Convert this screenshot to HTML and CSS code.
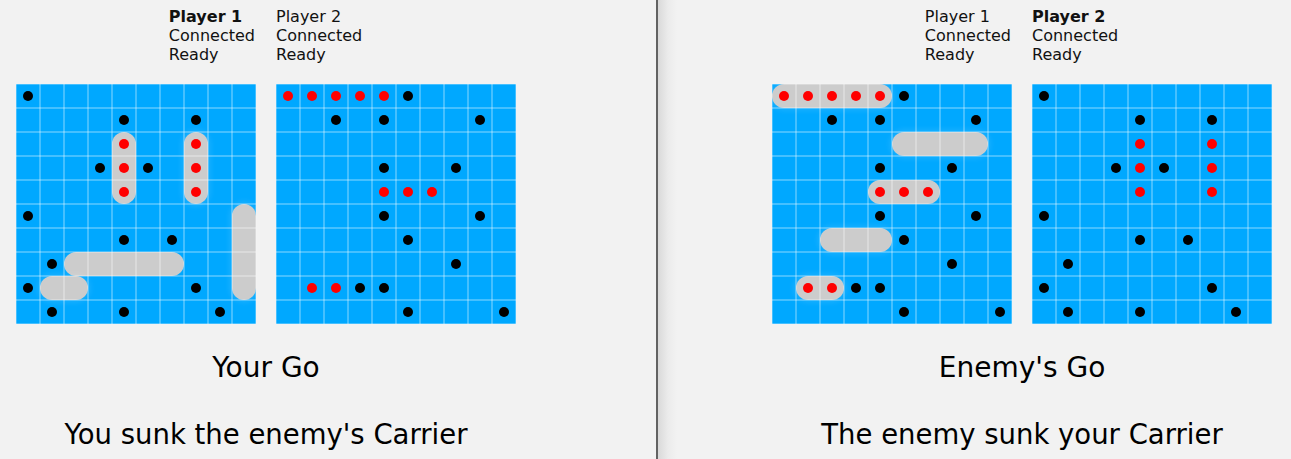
FILE: index.html
```html
<!DOCTYPE html>
<html lang="en">
<head>
<meta charset="utf-8">
<title>Battleships</title>
<link rel="stylesheet" href="styles.css">
</head>
<body>
<div class="screen">
  <section class="panel panel--left">
    <div class="game">
      <div class="status">
        <div class="player player--first"><b>Player 1</b><span>Connected</span><span>Ready</span></div>
        <div class="player"><span>Player 2</span><span>Connected</span><span>Ready</span></div>
      </div>
      <div class="boards">
        <div class="board">
          <div class="ship r2 c4 v3"></div>
          <div class="ship halo r2 c7 v3"></div>
          <div class="ship halo r5 c9 v4"></div>
          <div class="ship r7 c2 h5"></div>
          <div class="ship halo r8 c1 h2"></div>
          <i class="dot hit r2 c4"></i><i class="dot hit r3 c4"></i><i class="dot hit r4 c4"></i>
          <i class="dot hit r2 c7"></i><i class="dot hit r3 c7"></i><i class="dot hit r4 c7"></i>
          <i class="dot r0 c0"></i><i class="dot r1 c4"></i><i class="dot r1 c7"></i>
          <i class="dot r3 c3"></i><i class="dot r3 c5"></i><i class="dot r5 c0"></i>
          <i class="dot r6 c4"></i><i class="dot r6 c6"></i><i class="dot r7 c1"></i>
          <i class="dot r8 c0"></i><i class="dot r8 c7"></i><i class="dot r9 c1"></i>
          <i class="dot r9 c4"></i><i class="dot r9 c8"></i>
        </div>
        <div class="board">
          <i class="dot hit r0 c0"></i><i class="dot hit r0 c1"></i><i class="dot hit r0 c2"></i>
          <i class="dot hit r0 c3"></i><i class="dot hit r0 c4"></i>
          <i class="dot hit r4 c4"></i><i class="dot hit r4 c5"></i><i class="dot hit r4 c6"></i>
          <i class="dot hit r8 c1"></i><i class="dot hit r8 c2"></i>
          <i class="dot r0 c5"></i><i class="dot r1 c2"></i><i class="dot r1 c4"></i>
          <i class="dot r1 c8"></i><i class="dot r3 c4"></i><i class="dot r3 c7"></i>
          <i class="dot r5 c4"></i><i class="dot r5 c8"></i><i class="dot r6 c5"></i>
          <i class="dot r7 c7"></i><i class="dot r8 c3"></i><i class="dot r8 c4"></i>
          <i class="dot r9 c5"></i><i class="dot r9 c9"></i>
        </div>
      </div>
      <p class="turn">Your Go</p>
      <p class="message">You sunk the enemy's Carrier</p>
    </div>
  </section>
  <section class="panel panel--right">
    <div class="game">
      <div class="status">
        <div class="player player--first"><span>Player 1</span><span>Connected</span><span>Ready</span></div>
        <div class="player"><b>Player 2</b><span>Connected</span><span>Ready</span></div>
      </div>
      <div class="boards">
        <div class="board">
          <div class="ship halo r0 c0 h5"></div>
          <div class="ship halo r2 c5 h4"></div>
          <div class="ship r4 c4 h3"></div>
          <div class="ship halo r6 c2 h3"></div>
          <div class="ship halo r8 c1 h2"></div>
          <i class="dot hit r0 c0"></i><i class="dot hit r0 c1"></i><i class="dot hit r0 c2"></i>
          <i class="dot hit r0 c3"></i><i class="dot hit r0 c4"></i>
          <i class="dot hit r4 c4"></i><i class="dot hit r4 c5"></i><i class="dot hit r4 c6"></i>
          <i class="dot hit r8 c1"></i><i class="dot hit r8 c2"></i>
          <i class="dot r0 c5"></i><i class="dot r1 c2"></i><i class="dot r1 c4"></i>
          <i class="dot r1 c8"></i><i class="dot r3 c4"></i><i class="dot r3 c7"></i>
          <i class="dot r5 c4"></i><i class="dot r5 c8"></i><i class="dot r6 c5"></i>
          <i class="dot r7 c7"></i><i class="dot r8 c3"></i><i class="dot r8 c4"></i>
          <i class="dot r9 c5"></i><i class="dot r9 c9"></i>
        </div>
        <div class="board">
          <i class="dot hit r2 c4"></i><i class="dot hit r3 c4"></i><i class="dot hit r4 c4"></i>
          <i class="dot hit r2 c7"></i><i class="dot hit r3 c7"></i><i class="dot hit r4 c7"></i>
          <i class="dot r0 c0"></i><i class="dot r1 c4"></i><i class="dot r1 c7"></i>
          <i class="dot r3 c3"></i><i class="dot r3 c5"></i><i class="dot r5 c0"></i>
          <i class="dot r6 c4"></i><i class="dot r6 c6"></i><i class="dot r7 c1"></i>
          <i class="dot r8 c0"></i><i class="dot r8 c7"></i><i class="dot r9 c1"></i>
          <i class="dot r9 c4"></i><i class="dot r9 c8"></i>
        </div>
      </div>
      <p class="turn">Enemy's Go</p>
      <p class="message">The enemy sunk your Carrier</p>
    </div>
  </section>
</div>
</body>
</html>
```
FILE: styles.css
```css
* { box-sizing: border-box; }
html, body { margin: 0; padding: 0; }
body {
  background: #f2f2f2;
  color: #111;
  font-family: "DejaVu Sans", "Liberation Sans", sans-serif;
  overflow: hidden;
}
.screen {
  display: flex;
  height: 459px;
}
.panel {
  height: 100%;
}
.panel--left {
  width: 656px;
  flex: none;
  padding-left: 16px;
}
.panel--right {
  flex: 1;
  border-left: 2px solid #626262;
  padding-left: 114px;
  background: linear-gradient(to right, #d9d9d9 0, #ebebeb 10px, #f2f2f2 19px);
}
.game {
  width: 500px;
  display: flex;
  flex-direction: column;
}
.status {
  display: grid;
  grid-template-columns: 240px 240px;
  column-gap: 20px;
  padding-top: 7px;
  font-size: 16px;
  line-height: 19px;
}
.player {
  display: flex;
  flex-direction: column;
}
.player b { font-weight: bold; }
.player--first { justify-self: end; padding-right: 1px; }
.boards {
  display: flex;
  gap: 20px;
  margin-top: 20px;
}
.board {
  display: grid;
  grid-template-columns: repeat(10, 24px);
  grid-template-rows: repeat(10, 24px);
  width: 240px;
  height: 240px;
  background: #00a8ff;
}
.board::after {
  content: "";
  grid-area: 1 / 1 / 11 / 11;
  z-index: 2;
  background-image:
    linear-gradient(to right, rgba(255,255,255,.27) 1px, transparent 1px, transparent 23px, rgba(255,255,255,.27) 23px),
    linear-gradient(to bottom, rgba(255,255,255,.27) 1px, transparent 1px, transparent 23px, rgba(255,255,255,.27) 23px);
  background-size: 24px 24px;
}
.ship {
  z-index: 1;
  background: #cccccc;
  border-radius: 12px;
}
.ship.halo {
  box-shadow: 0 0 5px 3px rgba(255,255,255,.09);
}
.dot {
  z-index: 3;
  width: 10px;
  height: 10px;
  border-radius: 50%;
  background: #000;
  justify-self: center;
  align-self: center;
}
.dot.hit { background: #ff0000; }

.r0 { grid-row-start: 1; } .r1 { grid-row-start: 2; } .r2 { grid-row-start: 3; }
.r3 { grid-row-start: 4; } .r4 { grid-row-start: 5; } .r5 { grid-row-start: 6; }
.r6 { grid-row-start: 7; } .r7 { grid-row-start: 8; } .r8 { grid-row-start: 9; }
.r9 { grid-row-start: 10; }
.c0 { grid-column-start: 1; } .c1 { grid-column-start: 2; } .c2 { grid-column-start: 3; }
.c3 { grid-column-start: 4; } .c4 { grid-column-start: 5; } .c5 { grid-column-start: 6; }
.c6 { grid-column-start: 7; } .c7 { grid-column-start: 8; } .c8 { grid-column-start: 9; }
.c9 { grid-column-start: 10; }
.h2 { grid-column-end: span 2; } .h3 { grid-column-end: span 3; }
.h4 { grid-column-end: span 4; } .h5 { grid-column-end: span 5; }
.v3 { grid-row-end: span 3; } .v4 { grid-row-end: span 4; }

.turn {
  margin: 27px 0 0;
  text-align: center;
  font-size: 28px;
  line-height: 34px;
  color: #000;
}
.message {
  margin: 32px 0 0;
  text-align: center;
  font-size: 27.5px;
  line-height: 34px;
  white-space: nowrap;
  color: #000;
}
```
